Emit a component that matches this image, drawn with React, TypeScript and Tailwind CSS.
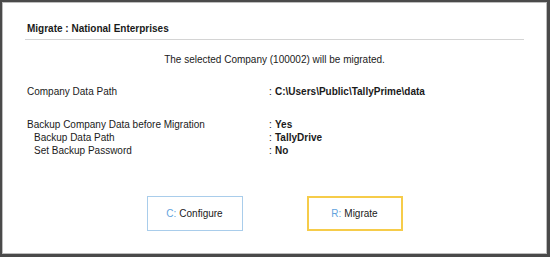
export default function App() {
  const rows = [
    { label: 'Backup Company Data before Migration', value: 'Yes', indent: false },
    { label: 'Backup Data Path', value: 'TallyDrive', indent: true },
    { label: 'Set Backup Password', value: 'No', indent: true },
  ];

  return (
    <div className="w-[550px] h-[257px] bg-[#4a4a4a] pt-[2px] pl-[2px] pr-[3px] pb-[3px] font-['Liberation_Sans',Arial,sans-serif] text-[#1a1a1a]">
      <div className="w-full h-full bg-white border border-[#bdbdbd] flex flex-col">
        {/* Header */}
        <div className="pt-[19px] px-[22px]">
          <div className="px-[2px] text-[10px] font-bold leading-[14px]">
            Migrate : National Enterprises
          </div>
          <div className="mt-[3px] h-px bg-[#d4d4d4]" />
        </div>

        <div className="mt-[13px] text-center text-[10px] leading-[14px]">
          The selected Company (100002) will be migrated.
        </div>

        {/* Details */}
        <div className="mt-[18px] px-[24px] text-[10px] leading-[13px]">
          <div className="flex">
            <div className="w-[242px]">Company Data Path</div>
            <div className="w-[6px]">:</div>
            <div className="font-bold">C:\Users\Public\TallyPrime\data</div>
          </div>

          <div className="mt-[20px]">
            {rows.map((r) => (
              <div key={r.label} className="flex">
                <div className={`w-[242px] ${r.indent ? 'pl-[7px]' : ''}`}>{r.label}</div>
                <div className="w-[6px]">:</div>
                <div className="font-bold">{r.value}</div>
              </div>
            ))}
          </div>
        </div>

        {/* Buttons */}
        <div className="mt-[39px] flex justify-center gap-[64px] text-[10px]">
          <div className="w-[96px] h-[35px] border border-[#a9cdeb] flex items-center justify-center">
            <span className="text-[#62a3dd]">C:</span>
            <span className="ml-[3px]">Configure</span>
          </div>
          <div className="w-[96px] h-[35px] border-2 border-[#f6cc4a] flex items-center justify-center">
            <span className="text-[#62a3dd]">R:</span>
            <span className="ml-[3px]">Migrate</span>
          </div>
        </div>
      </div>
    </div>
  );
}
